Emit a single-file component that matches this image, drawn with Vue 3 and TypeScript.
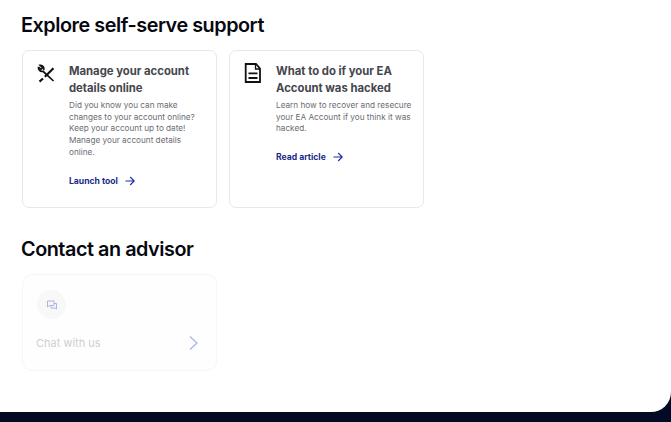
<template>
  <div class="page">
    <main class="sheet">
      <h2 class="heading">Explore self-serve support</h2>
      <div class="cards">
        <a v-for="card in cards" :key="card.title" class="card">
          <div class="card-icon">
            <svg v-if="card.icon === 'tools'" width="20" height="20" viewBox="0 0 20 20" fill="none" stroke="#111" stroke-width="1.700">
              <path d="M2.500 4C2 6.800 4.200 9 7 8.300L17.500 18" />
              <path d="M2.500 4l2.400 2.300 1.800-1.700-2.400-2.200C6.800 2.200 8.500 4.500 7.700 7" />
              <path d="M17.500 5.300l-8.700 8.500" stroke-width="2.200" />
              <path d="M7 15.500l-3.500 3.100" stroke-width="2.200" />
            </svg>
            <svg v-else width="20" height="20" viewBox="0 0 20 20" fill="none" stroke="#111" stroke-width="1.800">
              <path d="M2.700 1h10.300l4 4.500v13.500h-14.300z" />
              <path d="M12.500 1.200v4.800h4.500" stroke-width="1.300" />
              <path d="M5.500 10.300h9M5.500 15h9" />
            </svg>
          </div>
          <div class="card-body">
            <h3 class="card-title">{{ card.title }}</h3>
            <p class="card-text">{{ card.text }}</p>
            <span class="card-link">
              {{ card.link }}
              <svg width="10" height="10" viewBox="0 0 10 10" fill="none" stroke="#1a2fa8" stroke-width="1.100">
                <path d="M.5 5h8.500M5.200 1l4 4-4 4" />
              </svg>
            </span>
          </div>
        </a>
      </div>
      <h2 class="heading heading-contact">Contact an advisor</h2>
      <div class="chat-card">
        <div class="chat-icon">
          <svg width="10" height="10" viewBox="0 0 10 10" fill="none" stroke="#a9b4e6" stroke-width="1">
            <path d="M.5 1h6.500v4.500H2.500L.5 7z" />
            <path d="M7 3.500h2.500v5.500L8 8H4V5.500" />
          </svg>
        </div>
        <div class="chat-row">
          <span>Chat with us</span>
          <svg width="9" height="14" viewBox="0 0 9 14" fill="none" stroke="#a9b4e6" stroke-width="1.300">
            <path d="M1 .5l7 6.500-7 6.500" />
          </svg>
        </div>
      </div>
    </main>
  </div>
</template>

<script setup lang="ts">
interface Card {
  icon: string
  title: string
  text: string
  link: string
}

const cards: Card[] = [
  {
    icon: "tools",
    title: "Manage your account details online",
    text: "Did you know you can make changes to your account online? Keep your account up to date! Manage your account details online.",
    link: "Launch tool",
  },
  {
    icon: "doc",
    title: "What to do if your EA Account was hacked",
    text: "Learn how to recover and resecure your EA Account if you think it was hacked.",
    link: "Read article",
  },
]
</script>

<style>
html,
body {
  margin: 0;
  background: #030a26;
}
</style>

<style scoped>
.page {
  height: 422px;
  overflow: hidden;
  font-family: Inter, "Liberation Sans", sans-serif;
}
.sheet {
  height: 412px;
  box-sizing: border-box;
  padding: 13px 0 0 22px;
  background: #fff;
  border-radius: 0 0 20px 0;
}
.heading {
  margin: 0 0 0 -1px;
  font-size: 19.8px;
  line-height: 24px;
  font-weight: 600;
  letter-spacing: -0.45px;
  color: #06080f;
}
.heading-contact {
  margin-top: 29px;
}
.cards {
  display: flex;
  gap: 12px;
  margin-top: 13px;
}
.card {
  display: flex;
  box-sizing: border-box;
  width: 195px;
  height: 158px;
  padding: 12px 6px 0 13px;
  border: 1px solid #e8e8ec;
  border-radius: 7px;
}
.card-icon {
  width: 20px;
  height: 20px;
  margin-right: 13px;
  flex: none;
}
.card-title {
  margin: 0;
  font-size: 11.3px;
  line-height: 17px;
  font-weight: 700;
  color: #45464d;
}
.card-text {
  max-width: 138px;
  margin: 3px 0 0;
  font-size: 8.2px;
  line-height: 11.7px;
  color: #6b6c72;
}
.card-link {
  display: flex;
  align-items: center;
  gap: 7px;
  margin-top: 17px;
  font-size: 8.6px;
  font-weight: 700;
  color: #1a2a8c;
}
.chat-card {
  box-sizing: border-box;
  width: 195px;
  height: 97px;
  margin-top: 13px;
  padding: 15px 18px 0 13px;
  border: 1px solid #f6f6f8;
  border-radius: 10px;
  background: #fefefe;
}
.chat-icon {
  display: flex;
  align-items: center;
  justify-content: center;
  width: 29px;
  height: 29px;
  margin-left: 1px;
  border-radius: 50%;
  background: #f8f8f9;
}
.chat-row {
  display: flex;
  align-items: center;
  justify-content: space-between;
  margin-top: 17px;
  font-size: 11px;
  color: #cfcfd2;
}
</style>
